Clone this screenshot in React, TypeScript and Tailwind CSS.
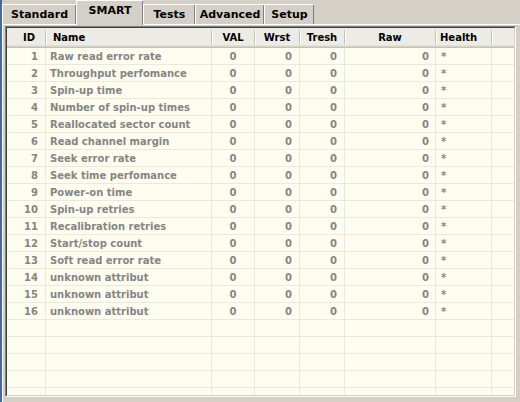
import React from "react";

const names = [
  "Raw read error rate",
  "Throughput perfomance",
  "Spin-up time",
  "Number of spin-up times",
  "Reallocated sector count",
  "Read channel margin",
  "Seek error rate",
  "Seek time perfomance",
  "Power-on time",
  "Spin-up retries",
  "Recalibration retries",
  "Start/stop count",
  "Soft read error rate",
  "unknown attribut",
  "unknown attribut",
  "unknown attribut",
];

function Row({ id, name }: { id?: number; name?: string }) {
  const has = id !== undefined;
  return (
    <div className="flex h-[17px] shrink-0 text-[10px] font-bold text-[#858585] leading-[18px]">
      <div className="w-[39px] border-r border-b border-[#ebe9df] pr-[7px] text-right">{has ? id : ""}</div>
      <div className="w-[166px] border-r border-b border-[#ebe9df] pl-[4px] whitespace-nowrap overflow-hidden">{has ? name : ""}</div>
      <div className="w-[43px] border-r border-b border-[#ebe9df] text-center">{has ? "0" : ""}</div>
      <div className="w-[45px] border-r border-b border-[#ebe9df] pr-[7px] text-right">{has ? "0" : ""}</div>
      <div className="w-[45px] border-r border-b border-[#ebe9df] pr-[7px] text-right">{has ? "0" : ""}</div>
      <div className="w-[91px] border-r border-b border-[#ebe9df] pr-[6px] text-right">{has ? "0" : ""}</div>
      <div className="w-[56px] border-r border-b border-[#ebe9df] pl-[5px]">{has ? "*" : ""}</div>
      <div className="w-[22px] border-b border-[#ebe9df]"></div>
    </div>
  );
}

export default function App() {
  const empties = [0, 1, 2, 3, 4];
  return (
    <div className="w-[520px] h-[402px] bg-[#d4d0c8] flex overflow-hidden font-['DejaVu_Sans',sans-serif] text-black">
      <div className="w-[2px] h-full bg-[#4a6a96] shrink-0" />
      <div className="flex-1 flex flex-col">
        <div className="h-[24px] flex items-end shrink-0">
          <div className="w-[74px] h-[20px] border-t border-l border-white shadow-[inset_-1px_0_0_#808080] flex items-center justify-center pt-[2px] text-[11px] font-bold">
            Standard
          </div>
          <div className="w-[67px] h-[25px] mb-[-1px] relative z-10 bg-[#d4d0c8] border-t border-l border-white shadow-[inset_-1px_0_0_#808080] flex items-center justify-center pb-[3px] text-[11px] font-bold">
            SMART
          </div>
          <div className="w-[52px] h-[20px] border-t border-l border-white shadow-[inset_-1px_0_0_#808080] flex items-center justify-center pt-[2px] text-[11px] font-bold">
            Tests
          </div>
          <div className="w-[69px] h-[20px] border-t border-l border-white shadow-[inset_-1px_0_0_#808080] flex items-center justify-center pt-[2px] text-[11px] font-bold">
            Advanced
          </div>
          <div className="w-[50px] h-[20px] border-t border-l border-white shadow-[inset_-1px_0_0_#808080] flex items-center justify-center pt-[2px] text-[11px] font-bold">
            Setup
          </div>
        </div>
        <div className="flex-1 border-t border-l border-white pt-[1px] pl-[2px]">
          <div className="w-[511px] h-[371px] border border-[#808080] border-r-white border-b-white">
            <div className="h-full border border-[#404040] border-r-[#d4d0c8] border-b-[#d4d0c8] bg-[#fffcf0] overflow-hidden flex flex-col">
              <div className="shrink-0 bg-[#ecebe5]">
                <div className="flex h-[17px] text-[10px] font-bold leading-[16px] pt-[2px]">
                  <div className="w-[39px] border-r border-[#c5c2b2] pl-[6px] flex items-center justify-center">ID</div>
                  <div className="w-[166px] border-r border-[#c5c2b2] shadow-[inset_1px_0_0_#fff] pl-[7px] flex items-center">Name</div>
                  <div className="w-[43px] border-r border-[#c5c2b2] shadow-[inset_1px_0_0_#fff] flex items-center justify-center">VAL</div>
                  <div className="w-[45px] border-r border-[#c5c2b2] shadow-[inset_1px_0_0_#fff] flex items-center justify-center">Wrst</div>
                  <div className="w-[45px] border-r border-[#c5c2b2] shadow-[inset_1px_0_0_#fff] flex items-center justify-center">Tresh</div>
                  <div className="w-[91px] border-r border-[#c5c2b2] shadow-[inset_1px_0_0_#fff] flex items-center justify-center">Raw</div>
                  <div className="w-[56px] border-r border-[#c5c2b2] shadow-[inset_1px_0_0_#fff] pl-[4px] flex items-center">Health</div>
                  <div className="w-[22px] shadow-[inset_1px_0_0_#fff]"></div>
                </div>
                <div className="h-[1px] bg-[#e2e1da]" />
                <div className="h-[1px] bg-[#d6d3c8]" />
                <div className="h-[1px] bg-[#c5c2b2]" />
              </div>
              {names.map((n, i) => (
                <Row key={i} id={i + 1} name={n} />
              ))}
              {empties.map((e) => (
                <Row key={"e" + e} />
              ))}
            </div>
          </div>
        </div>
      </div>
    </div>
  );
}
